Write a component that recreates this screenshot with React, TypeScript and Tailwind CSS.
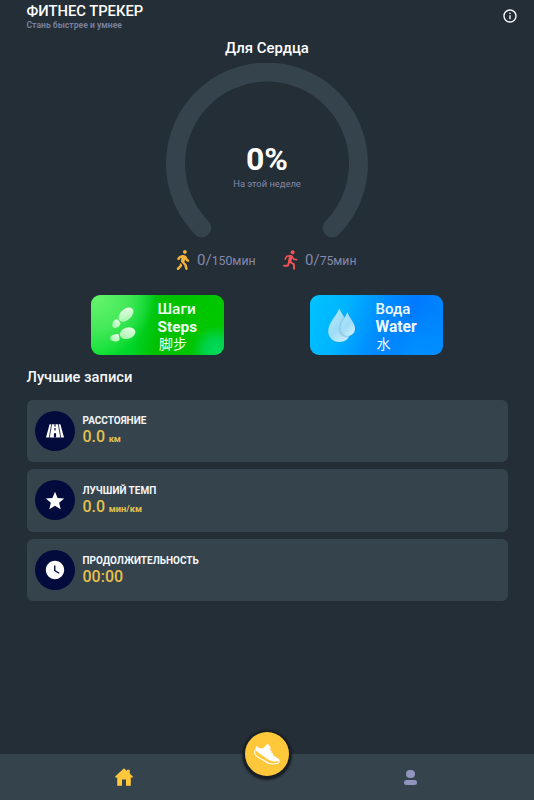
import React from 'react';
import { FaWalking } from 'react-icons/fa';
import { MdInfoOutline, MdStar, MdWatchLater } from 'react-icons/md';

interface RecordCardProps {
  icon: React.ReactNode;
  title: string;
  value: string;
  unit?: string;
}

const RoadIcon = () => (
  <svg width="18" height="14" viewBox="0 0 18 14" fill="#fff">
    <path d="M3.6 0.3H14.4L18 13.5H0z" />
    <path d="M5.7 0L3.2 14M12.3 0L14.8 14" stroke="#030b3d" strokeWidth="0.8" />
    <path d="M9 0.3V2.4M9 4V6.6" stroke="#030b3d" strokeWidth="1.2" />
    <path d="M9 9.2V13.5" stroke="#030b3d" strokeWidth="2.2" />
  </svg>
);

const RunnerIcon = () => (
  <svg width="15" height="20" viewBox="0 0 15 20" fill="none" stroke="#ef5357" strokeLinecap="round" strokeLinejoin="round">
    <circle cx="9.6" cy="2.2" r="2" fill="#ef5357" stroke="none" />
    <path d="M7.8 6.6L6.6 11.6" strokeWidth="3.4" />
    <path d="M7.6 5.8L3.7 6.3L2.2 9.2M9 6.4L10.6 9.1L13.6 9.8" strokeWidth="1.6" />
    <path d="M7.2 12L10.9 14.4L11.1 18.8M5.8 12.8L4.7 15.8L1 15.7" strokeWidth="1.9" />
  </svg>
);

const HomeIcon = () => (
  <svg width="18" height="18" viewBox="0 0 18 18" fill="#ffc83a">
    <path d="M9 0.2L12 3V1.8H14.8V5.6L17.8 8.6V9.6H15.8V17.8H11V11.5H7V17.8H2.2V9.6H0.2V8.6z" />
  </svg>
);

const FootprintsIcon = () => (
  <svg width="27" height="36" viewBox="0 0 27 36">
    <defs>
      <linearGradient id="sole" x1="1" y1="0" x2="0" y2="1">
        <stop offset="0" stopColor="#f0fff0" />
        <stop offset="1" stopColor="#9af5a2" />
      </linearGradient>
    </defs>
    <g fill="url(#sole)">
      <ellipse cx="16" cy="7.6" rx="8.7" ry="5.5" transform="rotate(-43 16 7.6)" />
      <path d="M4.2 13.4C5.7 12.2 7 12 7.9 12.7L10.4 16C10.2 19.3 6.5 21.7 3.8 20.7C1.5 19.6 2 15.4 4.2 13.4z" />
      <ellipse cx="17.6" cy="26.2" rx="8" ry="5.6" transform="rotate(-18 17.6 26.2)" />
      <path d="M3.6 27.8L7.9 26.8C9 27.6 9.6 31 9.4 33C7.6 34.8 3.1 35.1 1 33.1C-0.8 31.1 1 28.4 3.6 27.8z" />
    </g>
  </svg>
);

const WaterIcon = () => (
  <svg width="29" height="36" viewBox="0 0 29 36">
    <defs>
      <linearGradient id="drop" x1="0" y1="0" x2="0.7" y2="1">
        <stop offset="0" stopColor="#b4e9fd" />
        <stop offset="0.6" stopColor="#9fdcf7" />
        <stop offset="1" stopColor="#c9eefb" />
      </linearGradient>
      <filter id="dropShadow" x="-30%" y="-30%" width="160%" height="160%">
        <feDropShadow dx="-0.5" dy="0.8" stdDeviation="1" floodColor="#2f86bd" floodOpacity="0.6" />
      </filter>
    </defs>
    <path d="M11.3 0.5C13.3 6.5 22.6 15 22.6 23.3C22.6 29.4 17.6 34 11.3 34S0.2 29.4 0.2 23.3C0.2 15 9.3 6.5 11.3 0.5z" fill="url(#drop)" />
    <path d="M19.3 4C20.8 9 27 15 27 20.4C27 24.7 23.7 27.8 19.6 27.8S12.4 24.7 12.4 20.4C12.4 15 17.8 9 19.3 4z" fill="url(#drop)" filter="url(#dropShadow)" />
  </svg>
);

const ShoeIcon = () => (
  <svg width="26" height="21" viewBox="0 0 26 21" fill="#fff">
    <path d="M2.6 1.9C4.2 3.8 6.4 4.6 8.3 4.3C10 3.9 11.3 2.4 12.3 0.7L14.3 0.3C15.8 2 16.6 3.2 16.7 4.6L15.4 5.6L17.2 5.7L16.3 7.2L18 7.3L17.3 8.8L19.2 8.9L18.5 10.5C20.4 13 24.1 13.7 25.2 15.4C25.4 16.5 24.7 17.1 23.6 17.3C18.6 18 15.2 16.6 12 14C8.9 11.3 4.6 9.4 1.8 6.4C1.2 4.6 1.5 3 2.6 1.9z" />
    <path d="M1 6.2C0.5 8 0.4 9.5 1.5 11C3.6 13.6 8 15.1 11.1 17.3C14.9 20.1 19.9 20.5 23.7 19.3C24.8 18.9 25.3 18.1 25.2 16.6" fill="none" stroke="#fff" strokeWidth="1.1" strokeLinecap="round" />
  </svg>
);

const ProgressRing = () => (
  <div className="relative mx-auto h-[202px] w-[202px]">
    <svg width="202" height="202" viewBox="0 0 202 202" fill="none">
      <path d="M35.8 164.8A91.5 91.5 0 1 1 166.2 164.8" stroke="#35434d" strokeWidth="19" strokeLinecap="round" />
    </svg>
    <div className="absolute inset-0 flex flex-col items-center pt-[78px]">
      <div className="text-[32px] leading-[37px] font-bold text-white">0%</div>
      <div className="text-[9.4px] leading-[11px] text-[#8488aa]">На этой неделе</div>
    </div>
  </div>
);

const RecordCard: React.FC<RecordCardProps> = ({ icon, title, value, unit }) => (
  <div className="flex h-[62.5px] items-center rounded-[6px] bg-[#35434d] pl-2">
    <div className="flex h-10 w-10 items-center justify-center rounded-full bg-[#030b3d] text-white">{icon}</div>
    <div className="ml-2 pt-px">
      <div className="text-[10px] leading-[13px] font-bold text-[#f4f7fa]">{title}</div>
      <div className="text-[16px] leading-[19px] font-medium text-[#e5c04d]">
        {value}
        {unit && <span className="ml-[3.5px] text-[9.3px] font-bold">{unit}</span>}
      </div>
    </div>
  </div>
);

const App: React.FC = () => {
  return (
    <div className="flex h-[800px] w-[534px] flex-col overflow-hidden bg-[#242e36] font-['Roboto','Noto_Sans_CJK_SC',sans-serif]">
      <header className="flex h-[38px] justify-between pr-[16px] pl-[26.5px]">
        <div className="pt-[2px]">
          <h1 className="text-[14.75px] leading-[18px] font-medium text-white">ФИТНЕС ТРЕКЕР</h1>
          <p className="text-[8.6px] leading-[10px] font-bold text-[#777d9c]">Стань быстрее и умнее</p>
        </div>
        <MdInfoOutline className="mt-[8px]" size={16} color="#fff" />
      </header>

      <h2 className="h-[25px] text-center text-[14.9px] leading-[21px] font-medium text-white">Для Сердца</h2>
      <ProgressRing />

      {/* Weekly activity minutes */}
      <div className="-mt-[16px] flex h-[22px] items-center pl-[176px] text-[#8488aa]">
        <FaWalking className="h-[20px] w-[14px]" color="#f2b33d" />
        <div className="ml-[7px] w-[86px] text-[15px]">0/<span className="text-[12.3px]">150мин</span></div>
        <RunnerIcon />
        <div className="ml-[7px] text-[15px]">0/<span className="text-[12.2px]">75мин</span></div>
      </div>

      <div className="mt-[24px] flex justify-between pr-[91px] pl-[91px]">
        <button className="flex h-[60px] w-[133px] rounded-[9px] bg-[radial-gradient(circle_at_94%_92%,#00d95a_0%,#00d34b_8%,transparent_18%),radial-gradient(circle_at_4%_5%,#64f46b_0%,#45e95a_22%,transparent_42%),linear-gradient(100deg,#18e83b_0%,#00d52a_34%,#00c000_52%,#00c900_100%)] text-left">
          <div className="w-[66.5px] pt-[12px] pl-[19px]"><FootprintsIcon /></div>
          <div className="pt-[5px] text-[15.4px] leading-[18px] font-bold text-[#effff0]">
            <div className="font-medium">Шаги</div>
            <div>Steps</div>
            <div className="pl-[1.5px] text-[14px] leading-[16px] font-normal">脚步</div>
          </div>
        </button>
        <button className="flex h-[60px] w-[133px] rounded-[9px] bg-[radial-gradient(circle_at_80%_100%,#0090ff_0%,transparent_38%),linear-gradient(108deg,#00c2ff_0%,#00b5ff_25%,#008eff_50%,#007aff_70%,#008aff_100%)] text-left">
          <div className="w-[65.5px] pt-[13px] pl-[18px]"><WaterIcon /></div>
          <div className="pt-[5px] text-[15.6px] leading-[18px] font-bold text-[#f0faff]">
            <div className="text-[15px] font-medium">Вода</div>
            <div>Water</div>
            <div className="pl-px text-[14px] leading-[16px] font-normal">水</div>
          </div>
        </button>
      </div>

      <section className="px-[26.5px] pt-[12px]">
        <h2 className="h-[32.5px] text-[14.7px] leading-[20px] font-medium text-[#f4f7fa]">Лучшие записи</h2>
        <div className="flex flex-col gap-[7px]">
          <RecordCard icon={<RoadIcon />} title="РАССТОЯНИЕ" value="0.0" unit="км" />
          <RecordCard icon={<MdStar className="mt-[2px]" size={22} />} title="ЛУЧШИЙ ТЕМП" value="0.0" unit="мин/км" />
          <RecordCard icon={<MdWatchLater size={22} />} title="ПРОДОЛЖИТЕЛЬНОСТЬ" value="00:00" />
        </div>
      </section>

      <nav className="relative mt-auto flex h-[46px] justify-between bg-[#35434d] pr-[117px] pl-[114.5px]">
        <div className="pt-[14px]"><HomeIcon /></div>
        <div className="mt-[15.5px] flex w-[13px] flex-col items-center gap-[2px]">
          <div className="h-[8.5px] w-[8.5px] rounded-full bg-[#9194bd]" />
          <div className="h-[5px] w-[12.5px] rounded-full bg-[#9194bd]" />
        </div>
        <button className="absolute -top-[22px] left-[245px] flex h-[44px] w-[44px] items-center justify-center rounded-full bg-[#ffc83a] shadow-[0_1px_2px_3px_#171e25]">
          <ShoeIcon />
        </button>
      </nav>
    </div>
  );
};

export default App;
